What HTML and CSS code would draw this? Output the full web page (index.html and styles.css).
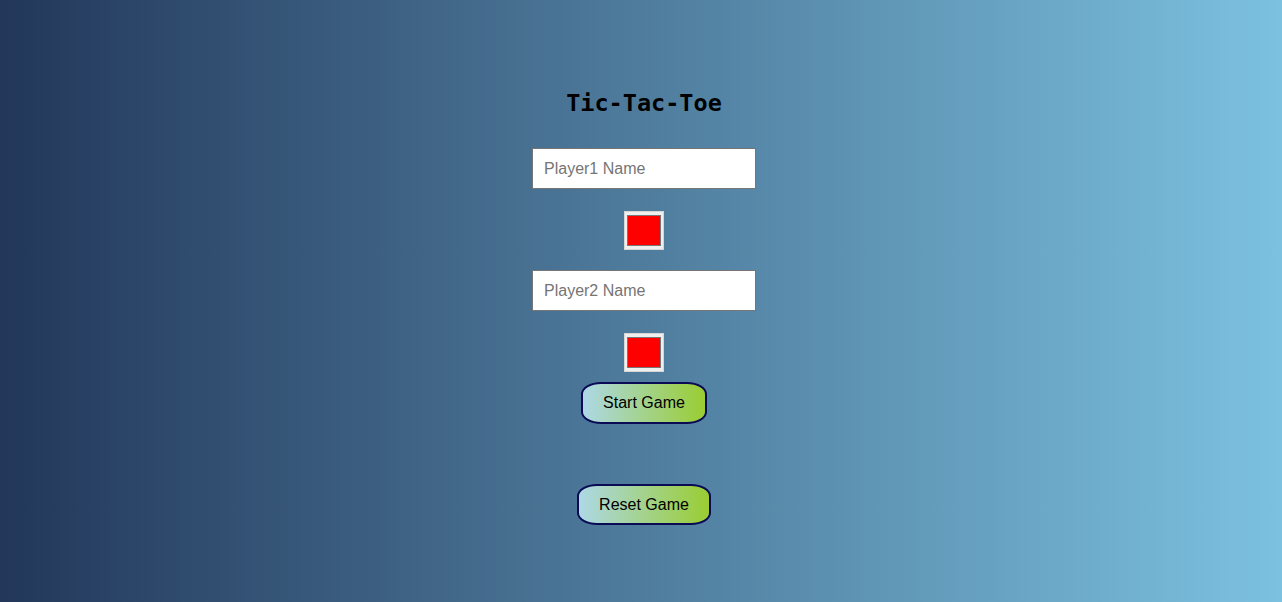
FILE: index.html
```html
<!DOCTYPE html>
<html lang="en">
<head>
<meta charset="UTF-8">
<title>Tic-Tac-Toe</title>
<link rel="stylesheet" href="styles.css">
</head>
<body>
  <main class="game">
    <h1 class="title">Tic-Tac-Toe</h1>
    <input class="name-input" type="text" placeholder="Player1 Name">
    <input class="color-input" type="color" value="#ff0000">
    <input class="name-input" type="text" placeholder="Player2 Name">
    <input class="color-input" type="color" value="#ff0000">
    <button class="btn btn-start">Start Game</button>
    <div class="board"></div>
    <button class="btn btn-reset">Reset Game</button>
  </main>
</body>
</html>
```
FILE: styles.css
```css
html, body {
  margin: 0;
  padding: 0;
}

body {
  min-height: 602px;
  background: linear-gradient(to right, #22375a, #7cc1e0);
  font-family: "Liberation Sans", Arial, sans-serif;
}

.game {
  display: flex;
  flex-direction: column;
  align-items: center;
  padding: 89px 0 0 6px;
}

.title {
  margin: 0;
  font-family: "DejaVu Sans Mono", monospace;
  font-size: 23.5px;
  line-height: 28px;
  font-weight: bold;
  color: #000;
}

.name-input {
  box-sizing: border-box;
  width: 224px;
  height: 41px;
  margin: 31px 0 0 0;
  padding: 0 11px;
  border: 1px solid #767676;
  background: #fff;
  font-family: "Liberation Sans", Arial, sans-serif;
  font-size: 16px;
  color: #000;
  outline: none;
}

.name-input + .color-input {
  margin-top: 22px;
}

.color-input + .name-input {
  margin-top: 20px;
}

.name-input::placeholder {
  color: #757575;
}

.color-input {
  box-sizing: border-box;
  width: 40px;
  height: 39px;
  padding: 0;
  margin: 0;
  border: 1px solid #d6d6d6;
  background: #efefef;
  cursor: pointer;
}

.color-input::-webkit-color-swatch-wrapper {
  padding: 3px 2px;
}

.color-input::-webkit-color-swatch {
  border: 1px solid #777;
}

.btn {
  box-sizing: border-box;
  height: 42px;
  padding: 0 20px;
  border: 2px solid #0a0a55;
  border-radius: 20px / 12px;
  background: linear-gradient(to right, #add8e6, #9acd32);
  font-family: "Liberation Sans", Arial, sans-serif;
  font-size: 16px;
  color: #000;
  cursor: pointer;
}

.btn-start {
  margin-top: 10px;
}

.board {
  height: 60px;
}

.btn-reset {
  height: 41px;
}
```
